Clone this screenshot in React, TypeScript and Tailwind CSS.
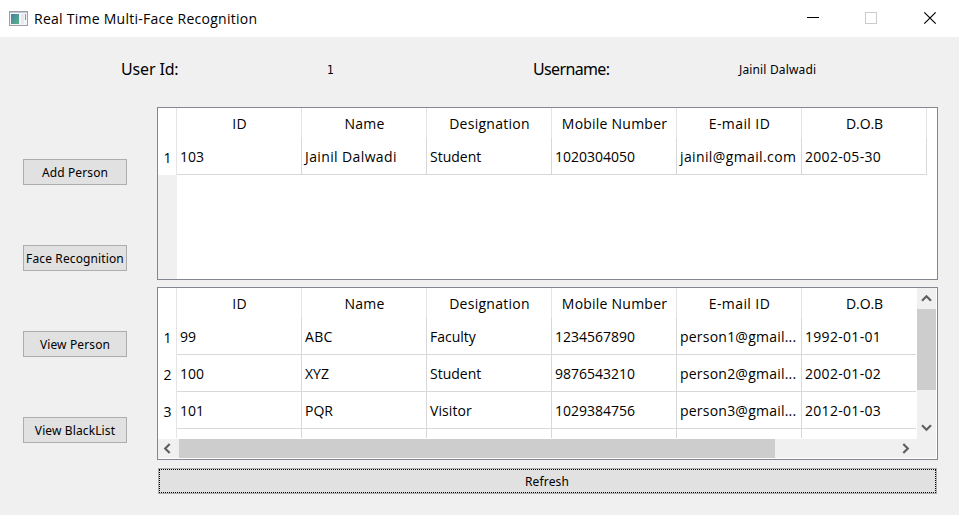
import type { ReactNode } from "react";

type Cell = { text: string; tracking?: string };

const headers: Cell[] = [
  { text: "ID", tracking: "tracking-[0.2px]" },
  { text: "Name", tracking: "tracking-[0.2px]" },
  { text: "Designation", tracking: "tracking-[0.27px]" },
  { text: "Mobile Number", tracking: "tracking-[0.23px]" },
  { text: "E-mail ID", tracking: "tracking-[0.42px]" },
  { text: "D.O.B", tracking: "tracking-[-0.1px]" },
];

const phone = (text: string): Cell => ({ text });
const date = (text: string): Cell => ({ text, tracking: "tracking-[0.3px]" });
const email = (text: string): Cell => ({ text, tracking: "tracking-[0.22px]" });

const currentUser: Cell[][] = [
  [
    { text: "103" },
    { text: "Jainil Dalwadi", tracking: "tracking-[0.38px]" },
    { text: "Student" },
    phone("1020304050"),
    { text: "jainil@gmail.com", tracking: "tracking-[0.38px]" },
    date("2002-05-30"),
  ],
];

const people: Cell[][] = [
  [{ text: "99" }, { text: "ABC", tracking: "tracking-[0.3px]" }, { text: "Faculty" }, phone("1234567890"), email("person1@gmail..."), date("1992-01-01")],
  [{ text: "100" }, { text: "XYZ" }, { text: "Student" }, phone("9876543210"), email("person2@gmail..."), date("2002-01-02")],
  [{ text: "101" }, { text: "PQR" }, { text: "Visitor", tracking: "tracking-[0.1px]" }, phone("1029384756"), email("person3@gmail..."), date("2012-01-03")],
];

function AppIcon() {
  return (
    <svg width="20" height="16" viewBox="0 0 20 16" shapeRendering="crispEdges">
      <defs>
        <linearGradient id="pane" x1="0" y1="0" x2="1" y2="1">
          <stop offset="0" stopColor="#4a7ea8" />
          <stop offset="1" stopColor="#55b487" />
        </linearGradient>
      </defs>
      <rect x="0.5" y="0.5" width="18" height="14" fill="#f4f5f8" stroke="#9a9fa8" />
      <rect x="1" y="1" width="17" height="1" fill="#c3c8d1" />
      <rect x="2" y="3" width="8" height="10" fill="url(#pane)" />
      <rect x="12" y="3" width="3" height="10" fill="#e6e8ee" />
      <rect x="16" y="3" width="1" height="6" fill="#62ad8e" />
    </svg>
  );
}

function TitleBar() {
  return (
    <header className="flex h-[37px] shrink-0 items-center bg-white pl-[9px] font-['Open_Sans',sans-serif] text-[14px] text-black">
      <AppIcon />
      <h1 className="ml-[5px] flex-1 whitespace-nowrap leading-[20px] tracking-[0.26px]">Real Time Multi-Face Recognition</h1>
      <svg width="159" height="37" viewBox="800 0 159 37" fill="none" className="shrink-0">
        <path d="M807 17.5h12" stroke="#000" />
        <rect x="865.5" y="12.5" width="11" height="11" stroke="#ccc" />
        <path d="M924.3 12.3l11.4 11.4M935.7 12.3l-11.4 11.4" stroke="#000" strokeWidth="1.2" />
      </svg>
    </header>
  );
}

function SideButton({ children }: { children: ReactNode }) {
  return (
    <button className="flex h-[26px] w-[104px] items-center justify-center whitespace-nowrap border border-[#adadad] bg-[#e1e1e1] pt-px tracking-[0.12px]">
      {children}
    </button>
  );
}

function Grid({ rows, partialRow = false }: { rows: Cell[][]; partialRow?: boolean }) {
  return (
    <div className="flex w-[769px] shrink-0 flex-col bg-white">
      <div className="flex h-[30px] shrink-0">
        <div className="w-[19px] shrink-0 border-r border-[#e5e5e5]" />
        {headers.map((h) => (
          <div key={h.text} className="flex w-[125px] shrink-0 items-center justify-center whitespace-nowrap border-r border-[#e5e5e5] pl-px pt-[2px]">
            <span className={h.tracking}>{h.text}</span>
          </div>
        ))}
      </div>
      {rows.map((row, r) => (
        <div key={r} className="flex h-[37px] shrink-0">
          <div className="flex w-[19px] shrink-0 items-center justify-center border-r border-[#e5e5e5] pl-px pt-[3px]">{r + 1}</div>
          {row.map((cell, c) => (
            <div key={c} className="flex w-[125px] shrink-0 items-center whitespace-nowrap border-b border-r border-[#d8d8d8] pb-px pl-[3px] pt-[2px]">
              <span className={cell.tracking}>{cell.text}</span>
            </div>
          ))}
        </div>
      ))}
      {partialRow && (
        <div className="flex h-[9px] shrink-0">
          <div className="w-[19px] shrink-0 border-r border-[#e5e5e5]" />
          {headers.map((h) => (
            <div key={h.text} className="w-[125px] shrink-0 border-r border-[#d8d8d8]" />
          ))}
        </div>
      )}
    </div>
  );
}

function Chevron({ d, w, h }: { d: string; w: number; h: number }) {
  return (
    <svg width={w} height={h} viewBox={`0 0 ${w} ${h}`} fill="none">
      <path d={d} stroke="#606060" strokeWidth="2.2" />
    </svg>
  );
}

export default function App() {
  return (
    <div className="flex h-[515px] w-[959px] flex-col overflow-hidden bg-[#f0f0f0] text-black">
      <TitleBar />
      <section className="flex h-[70px] shrink-0 items-center whitespace-nowrap font-['Noto_Sans',sans-serif]">
        <span className="ml-[121px] w-[206px] pb-[6px] text-[16px] tracking-[-0.15px]">User Id:</span>
        <span className="w-[206px] pb-[5px] font-['DejaVu_Sans_Condensed','DejaVu_Sans',sans-serif] text-[12px]">1</span>
        <span className="w-[206px] pb-[6px] text-[16px] tracking-[-0.65px]">Username:</span>
        <span className="pb-[4px] text-[12px] tracking-[0.15px]">Jainil Dalwadi</span>
      </section>
      <div className="flex">
        <nav className="ml-[23px] mt-[52px] flex w-[134px] shrink-0 flex-col gap-[60px] font-['Noto_Sans',sans-serif] text-[12px]">
          <SideButton>Add Person</SideButton>
          <SideButton>Face Recognition</SideButton>
          <SideButton>View Person</SideButton>
          <SideButton>View BlackList</SideButton>
        </nav>
        <main className="flex w-[781px] flex-col font-['Open_Sans',sans-serif] text-[14px] leading-[20px]">
          <div className="flex h-[173px] flex-col border border-[#828790] bg-white">
            <Grid rows={currentUser} />
            <div className="w-[19px] flex-1 bg-[#f0f0f0]" />
          </div>
          <div className="mt-[7px] flex h-[173px] flex-col border border-[#828790] bg-white pb-px pr-px">
            <div className="flex h-[151px] shrink-0">
              <div className="h-[150px] w-[758px] shrink-0 overflow-hidden">
                <Grid rows={people} partialRow />
              </div>
              <div className="ml-px flex w-[19px] shrink-0 flex-col items-center bg-[#f0f0f0]">
                <div className="flex h-[21px] items-center pb-px">
                  <Chevron w={11} h={8} d="M1 6.7L5.5 2.2L10 6.7" />
                </div>
                <div className="h-[81px] w-full bg-[#cdcdcd]" />
                <div className="mt-[34px]">
                  <Chevron w={11} h={8} d="M1 1.3L5.5 5.8L10 1.3" />
                </div>
              </div>
            </div>
            <div className="flex h-[19px] shrink-0 items-center bg-[#f0f0f0]">
              <div className="flex w-[21px] pl-[5px]">
                <Chevron w={8} h={11} d="M6.7 1L2.2 5.5L6.7 10" />
              </div>
              <div className="h-full w-[596px] bg-[#cdcdcd]" />
              <div className="ml-[127px]">
                <Chevron w={8} h={11} d="M1.3 1L5.8 5.5L1.3 10" />
              </div>
            </div>
          </div>
          <button className="ml-px mt-[8px] flex h-[26px] w-[779px] border border-[#adadad] bg-[#e1e1e1] font-['Noto_Sans',sans-serif] text-[12px]">
            <span className="h-[24px] w-[777px] border border-dotted border-black pr-px text-center leading-[23px] tracking-[0.15px]">Refresh</span>
          </button>
        </main>
      </div>
    </div>
  );
}
